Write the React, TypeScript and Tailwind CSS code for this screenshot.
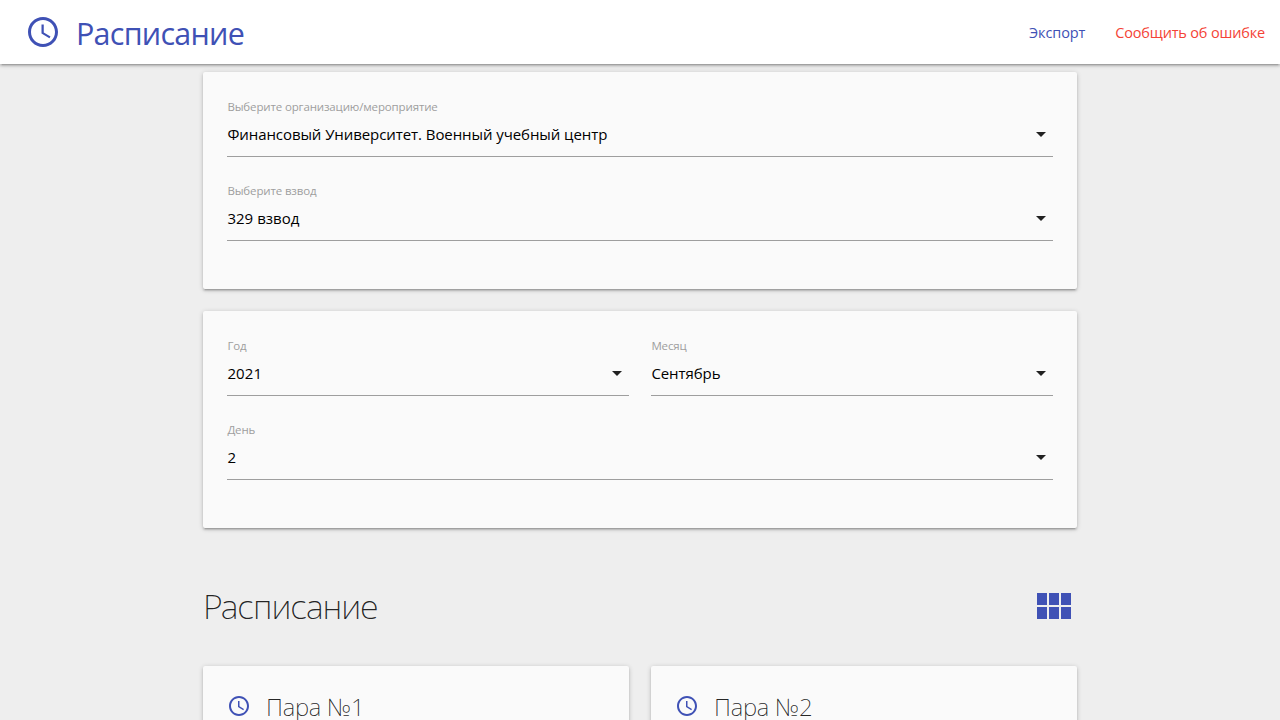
const FONT = "font-['Open_Sans','Noto_Sans',sans-serif]";
const THIN_FONT = "font-['Noto_Sans','Open_Sans',sans-serif]";
const SHADOW =
  "shadow-[0_2px_2px_0_rgba(0,0,0,0.14),0_3px_1px_-2px_rgba(0,0,0,0.12),0_1px_5px_0_rgba(0,0,0,0.2)]";

function ClockIcon({ className }: { className: string }) {
  return (
    <svg viewBox="0 0 24 24" fill="currentColor" className={className}>
      <path d="M11.99 2C6.47 2 2 6.48 2 12s4.47 10 9.99 10C17.52 22 22 17.52 22 12S17.52 2 11.99 2zM12 20c-4.42 0-8-3.58-8-8s3.58-8 8-8 8 3.58 8 8-3.58 8-8 8z" />
      <path d="M12.5 7H11v6l5.25 3.15.75-1.23-4.5-2.67z" />
    </svg>
  );
}

function Field({ label, value, valueClass }: { label: string; value: string; valueClass: string }) {
  return (
    <div className="h-[84px] min-w-0 flex-1 pt-[2px]">
      <div className="h-4 text-[#9e9e9e]">
        <span className="block whitespace-nowrap pl-[0.4px] text-[11.5px] leading-4 tracking-[-0.14px]">{label}</span>
      </div>
      <div className="flex h-[42px] justify-between border-b border-[#9e9e9e] pt-[7px]">
        <span className={`whitespace-nowrap pl-[0.4px] text-[15px] leading-6 text-black ${valueClass}`}>{value}</span>
        <svg viewBox="0 0 24 24" className="size-6 shrink-0 text-black/87" fill="currentColor">
          <path d="M7 10l5 5 5-5z" />
        </svg>
      </div>
    </div>
  );
}

function Lesson({ title }: { title: string }) {
  return (
    <div className={`flex h-[160px] flex-1 items-start rounded-[2px] bg-[#fafafa] px-6 pt-[25px] ${SHADOW}`}>
      <ClockIcon className="mt-[3px] ml-[0.3px] size-6 text-[#3f51b5]" />
      <h3 className={`ml-[14.7px] text-[24px] font-extralight leading-8 tracking-[-0.2px] text-black/87 ${THIN_FONT}`}>{title}</h3>
    </div>
  );
}

export default function App() {
  return (
    <div className={`h-[720px] overflow-hidden bg-[#eee] ${FONT}`}>
      <header className={`relative flex h-16 items-center justify-between bg-white pl-[25px] pr-[15px] ${SHADOW}`}>
        <div className="flex items-center text-[#3f51b5]">
          <ClockIcon className="size-9" />
          <h1 className="ml-[15px] mt-[2px] text-[30.5px] leading-10 tracking-[-0.75px]">Расписание</h1>
        </div>
        <nav className="flex gap-[30px] pt-[2px] text-[14.5px] leading-6">
          <a className="tracking-[-0.1px] text-[#3f51b5]">Экспорт</a>
          <a className="tracking-[-0.17px] text-[#f44336]">Сообщить об ошибке</a>
        </nav>
      </header>
      <main className="mx-auto w-[874px] pt-2">
        <section className={`h-[217px] rounded-[2px] bg-[#fafafa] px-6 pt-[25px] ${SHADOW}`}>
          <Field label="Выберите организацию/мероприятие" value="Финансовый Университет. Военный учебный центр" valueClass="tracking-[-0.075px]" />
          <Field label="Выберите взвод" value="329 взвод" valueClass="tracking-[0.04px]" />
        </section>
        <section className={`mt-[22px] h-[217px] rounded-[2px] bg-[#fafafa] px-6 pt-[25px] ${SHADOW}`}>
          <div className="flex gap-[22px]">
            <Field label="Год" value="2021" valueClass="tracking-[0.1px]" />
            <Field label="Месяц" value="Сентябрь" valueClass="tracking-[-0.07px]" />
          </div>
          <Field label="День" value="2" valueClass="tracking-[0px]" />
        </section>
        <div className="mt-[55px] flex h-12 items-center justify-between">
          <h2 className={`-mt-[2px] text-[34px] font-extralight leading-[48px] tracking-[-1px] text-black/87 ${THIN_FONT}`}>Расписание</h2>
          <svg viewBox="0 0 24 24" className="size-12 text-[#3f51b5]" fill="currentColor">
            <path d="M4 11h5V5H4v6zm0 7h5v-6H4v6zm6 0h5v-6h-5v6zm6 0h5v-6h-5v6zm-6-7h5V5h-5v6zm6-6v6h5V5h-5z" />
          </svg>
        </div>
        <div className="mt-[35px] flex gap-[22px]">
          <Lesson title="Пара №1" />
          <Lesson title="Пара №2" />
        </div>
      </main>
    </div>
  );
}
